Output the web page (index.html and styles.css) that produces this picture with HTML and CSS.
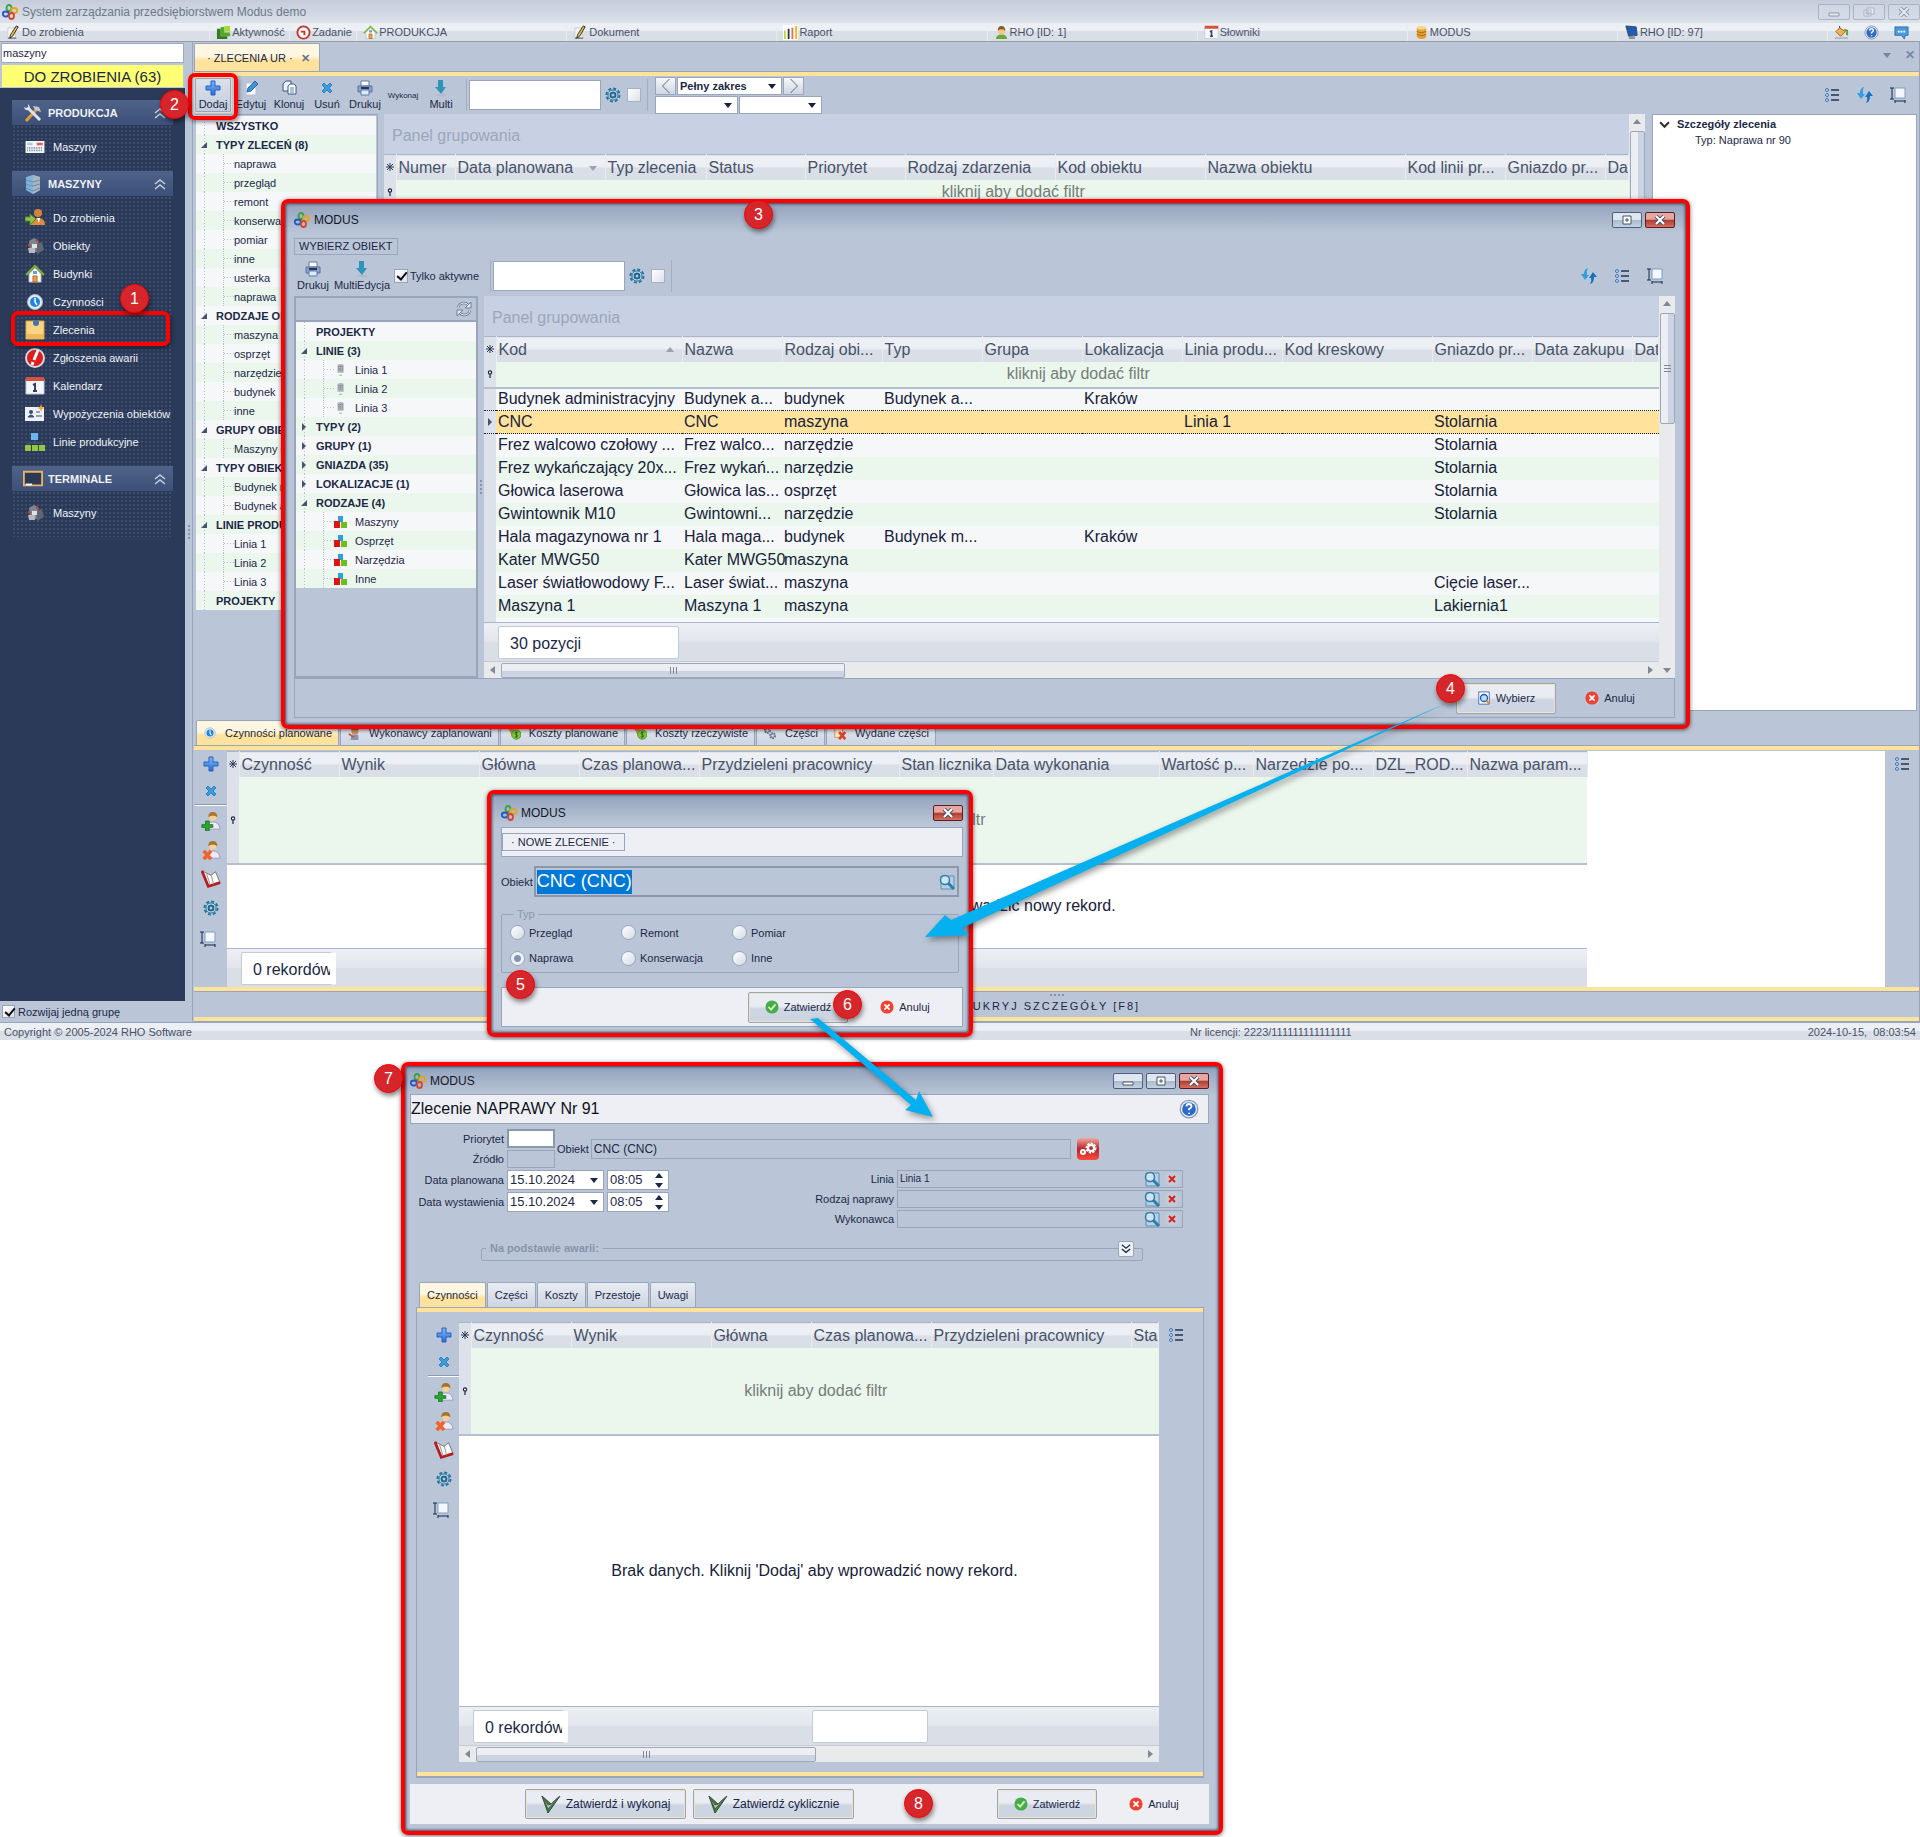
FILE: index.html
```html
<!DOCTYPE html>
<html lang="pl">
<head>
<meta charset="utf-8">
<title>System zarządzania przedsiębiorstwem Modus demo</title>
<link rel="stylesheet" href="styles.css">
</head>
<body>
<svg class="defs" aria-hidden="true">
<defs>
<linearGradient id="g-blue" x1="0" y1="0" x2="0" y2="1"><stop offset="0" stop-color="#7db8f5"/><stop offset="1" stop-color="#2a6fd6"/></linearGradient>
<linearGradient id="g-red" x1="0" y1="0" x2="0" y2="1"><stop offset="0" stop-color="#f0a8a0"/><stop offset=".5" stop-color="#b8252a"/><stop offset="1" stop-color="#ff4a3c"/></linearGradient>
</defs>
<symbol id="i-logo" viewBox="0 0 16 16"><g fill="none" stroke-width="1.800"><ellipse cx="7" cy="4" rx="2.500" ry="3" stroke="#3ba23e"/><ellipse cx="3.800" cy="10" rx="3" ry="2.500" stroke="#2458c8"/><ellipse cx="12.200" cy="6.500" rx="3" ry="2.500" stroke="#e8a317"/><ellipse cx="9.500" cy="12" rx="2.500" ry="3" stroke="#d8452c"/></g></symbol>
<symbol id="i-pencil" viewBox="0 0 16 16"><path d="M2 3h8v11H2z" fill="#f6f6f6" stroke="#c9ccd2"/><path d="m11 1 2 1-6 10-3 2 1-4z" fill="#f0c34c" stroke="#222"/><path d="M2 14h9" stroke="#4a4a4a"/></symbol>
<symbol id="i-activity" viewBox="0 0 16 16"><path d="M1 4h4v8h7v3H1z" fill="#2f7d1e"/><path d="M5 2h4v6h6v4H5z" fill="#56a62a"/><path d="M9 1h6v6H9z" fill="#a6d93e"/></symbol>
<symbol id="i-clockred" viewBox="0 0 16 16"><circle cx="8" cy="8" r="6.500" fill="#fff" stroke="#c0352c" stroke-width="2"/><path d="M5 7h4v4" fill="none" stroke="#c0352c" stroke-width="2"/></symbol>
<symbol id="i-house" viewBox="0 0 20 20"><path d="M4 10v8h12v-8l-6-6z" fill="#fbfbfb" stroke="#b9bec8"/><path d="m1 11 9-9 9 9" fill="none" stroke="#7fb23a" stroke-width="2"/><path d="M8 12h4v6H8z" fill="#e9a24e" stroke="#b06a1c"/><path d="M8 7h4v3H8z" fill="#6d9bd8"/></symbol>
<symbol id="i-bars" viewBox="0 0 16 16"><path d="M0 0h16v16H0z" fill="#fff"/><path d="M2 6v9" stroke="#c4d72e" stroke-width="2"/><path d="M6 4v11" stroke="#2b3a4c" stroke-width="2"/><path d="M10 3v12" stroke="#ec6a66" stroke-width="2"/><path d="M14 1v14" stroke="#f2b70c" stroke-width="2"/></symbol>
<symbol id="i-user" viewBox="0 0 16 16"><path d="M2 15q0-5 6-5t6 5z" fill="#6aa836"/><circle cx="8" cy="6" r="4" fill="#f0c590"/><path d="M4 6q0-5 4-5t4 5q-4-3-8 0" fill="#8a5a1e"/></symbol>
<symbol id="i-cal" viewBox="0 0 20 20"><path d="M1 3h18v15H1z" fill="#f4f6fa" stroke="#c3cad8"/><path d="M1 1h18v4H1z" fill="#d9503e"/><path d="M8 9 10 8v7M8 15h4" fill="none" stroke="#33415c" stroke-width="2"/></symbol>
<symbol id="i-db" viewBox="0 0 16 16"><path d="M3 3v10q5 4 10 0V3z" fill="#e5a034"/><ellipse cx="8" cy="3" rx="5" ry="2" fill="#f8d58a"/><path d="M3 7q5 3 10 0M3 10q5 3 10 0" fill="none" stroke="#a86a10"/></symbol>
<symbol id="i-monitor" viewBox="0 0 16 16"><path d="m2 1 11 1 1 9-9 1z" fill="#1d5bb5" stroke="#3d4654"/><path d="m6 12 5-1 1 4H5z" fill="#8a93a1"/></symbol>
<symbol id="i-bucket" viewBox="0 0 16 16"><path d="m6 3 6 4-5 5-5-5z" fill="#f0b452" stroke="#a4551a"/><path d="M6 3V1" stroke="#333"/><path d="m11 5 3 1v5" fill="none" stroke="#5aa02c" stroke-width="2"/><path d="M1 14h14" stroke="#b5b9c2" stroke-width="2"/></symbol>
<symbol id="i-help" viewBox="0 0 16 16"><circle cx="8" cy="8" r="7" fill="#eef2fa" stroke="#8b97ad"/><circle cx="8" cy="8" r="5.500" fill="#2a6ac8"/><path d="M6 6q0-2 2-2t2 2q0 1-2 2v1M8 11v1" fill="none" stroke="#fff" stroke-width="1.500"/></symbol>
<symbol id="i-chat" viewBox="0 0 16 16"><path d="M1 2h14v9h-3l-1 4-3-4H1z" fill="#4a9ad8" stroke="#2f72ad"/><path d="M4 7h2M7 7h2M10 7h2" stroke="#fff" stroke-width="2"/></symbol>
<symbol id="i-tools" viewBox="0 0 20 20"><path d="m3 18 10-11" stroke="#e29b3c" stroke-width="3"/><path d="m10 3 6 1 2 5-3-1-3-1z" fill="#c3cad6"/><path d="m5 5 12 12" stroke="#dfe4ec" stroke-width="3"/><path d="M1 4q1 4 5 3 2-3-1-6v3L3 5z" fill="#dfe4ec"/></symbol>
<symbol id="i-keyboard" viewBox="0 0 22 14"><path d="M0 0h22v14H0z" fill="#f2f5fa"/><path d="M2 2h6v3H2z" fill="#b4c8e6"/><path d="M13 2h7v3h-7z" fill="#e06050"/><path d="M2 8h18M2 11h18" stroke="#7a8598" stroke-width="2" stroke-dasharray="1 1"/></symbol>
<symbol id="i-barrel" viewBox="0 0 20 20"><path d="m3 3 7-2 7 2v13l-7 4-7-4z" fill="#7fb4da"/><path d="m10 1 7 2v13l-7 4z" fill="#a9b5c2"/><path d="m3 6 7 2 7-2M3 10l7 2 7-2M3 14l7 3 7-3" fill="none" stroke="#6f8ca8"/></symbol>
<symbol id="i-todo" viewBox="0 0 20 20"><circle cx="13" cy="5" r="4" fill="#d6833a"/><path d="M6 17q0-7 7-7t7 7z" fill="#e08b3c"/><path d="m12 10 2 5 1-5z" fill="#fff"/><path d="M0 9h5V6l6 5-6 6v-4H0z" fill="#8bc34a" stroke="#55862a"/></symbol>
<symbol id="i-machine" viewBox="0 0 20 20"><path d="M4 5 9 2l4 2v12H5z" fill="#7d8590"/><path d="m11 8 6-2 2 8-7 4z" fill="#5d6672"/><path d="M3 12h7v5H4z" fill="#b4bac2"/><path d="M7 8h5v4H7z" fill="#dfe3e8"/><path d="m11 4 3 2M3 9l3 1" stroke="#c0453a" stroke-width="2"/></symbol>
<symbol id="i-clock" viewBox="0 0 20 20"><circle cx="10" cy="10" r="7.500" fill="#e4eaf2" stroke="#aeb8c8"/><circle cx="10" cy="10" r="5" fill="#1f86dc"/><path d="M10 6v4l2 3" fill="none" stroke="#fff" stroke-width="1.500"/></symbol>
<symbol id="i-note" viewBox="0 0 20 20"><path d="M1 1h18v18H1z" fill="#f9d483" stroke="#d9a844"/><path d="M1 14h18v5H1z" fill="#efb95a"/><circle cx="11" cy="3" r="3" fill="#3f74b8"/></symbol>
<symbol id="i-alert" viewBox="0 0 20 20"><circle cx="10" cy="10" r="9" fill="#e01c1c" stroke="#d5d8de" stroke-width="2"/><path d="M13 2 9 12M8 14l-1 3" stroke="#fff" stroke-width="3"/></symbol>
<symbol id="i-card" viewBox="0 0 20 20"><path d="M0 3h19v14H0z" fill="#eef2f8"/><circle cx="6" cy="8" r="2" fill="#38507c"/><path d="M3 13q3-4 6 0zM11 8h4M11 12h6" fill="#38507c" stroke="#38507c"/><path d="m16 0 1 3 3 1-3 1-1 3-1-3-3-1 3-1z" fill="#f5a437"/></symbol>
<symbol id="i-org" viewBox="0 0 20 20"><path d="M6 1h7v7H6z" fill="#6db3ee"/><path d="M10 8v4M3 13v-2h14v2" fill="none" stroke="#46597a"/><path d="M0 13h6v6H0zM7 13h6v6H7zM14 13h6v6h-6z" fill="#93c83e"/></symbol>
<symbol id="i-term" viewBox="0 0 22 18"><path d="M1 1h20v15H1z" fill="#2c3a56" stroke="#e6b464" stroke-width="2"/><path d="M3 15h7" stroke="#fff" stroke-width="2"/></symbol>
<symbol id="i-plus" viewBox="0 0 16 16"><path d="M6 1h4v5h5v4h-5v5H6v-5H1V6h5z" fill="url(#g-blue)" stroke="#2560c0"/></symbol>
<symbol id="i-x" viewBox="0 0 16 16"><path d="m5 3 3 3 3-3 2 2-3 3 3 3-2 2-3-3-3 3-2-2 3-3-3-3z" fill="#3f9ad6" stroke="#2d84c2"/></symbol>
<symbol id="i-edit" viewBox="0 0 16 16"><path d="M3 3h7l3 3v9H3z" fill="#f6f8fc" stroke="#b5bfd0"/><path d="m12 1 3 3-7 7-4 1 1-4z" fill="#3d94dd" stroke="#2b6298"/></symbol>
<symbol id="i-copy" viewBox="0 0 16 16"><path d="M5 1h5v10H2V4z" fill="#eef2f8" stroke="#3f5578"/><path d="M9 4h4l2 2v8H7V6z" fill="#fff" stroke="#3f5578"/><path d="M9 8h4M9 10h4M9 12h4" stroke="#4f86c8"/></symbol>
<symbol id="i-print" viewBox="0 0 16 16"><path d="M4 1h8v5H4z" fill="#fff" stroke="#6278a4"/><path d="M1 6h14v6H1z" fill="#8fa1c8" stroke="#5a70a2"/><path d="M4 8h8" stroke="#23345e" stroke-width="2"/><path d="M4 10h8v5H4z" fill="#d8ecfb" stroke="#6278a4"/></symbol>
<symbol id="i-down" viewBox="0 0 16 16"><path d="M5 0h5v7h3l-5 7-6-7h3z" fill="#2f94b8"/><path d="M3 15h10" stroke="#a6b2c2"/></symbol>
<symbol id="i-gear" viewBox="0 0 16 16"><circle cx="8" cy="8" r="6.500" fill="none" stroke="#27749c" stroke-width="2" stroke-dasharray="3 2"/><circle cx="8" cy="8" r="5" fill="#d8ecf4" stroke="#27749c"/><circle cx="8" cy="8" r="2.500" fill="#bac6d7" stroke="#1c6590" stroke-width="2"/></symbol>
<symbol id="i-list" viewBox="0 0 16 16"><g fill="#cfe0f4" stroke="#3c74b8"><circle cx="3" cy="3" r="1.500"/><circle cx="3" cy="8" r="1.500"/><circle cx="3" cy="13" r="1.500"/></g><path d="M7 3h8M7 8h8M7 13h8" stroke="#243452" stroke-width="1.500"/></symbol>
<symbol id="i-sync" viewBox="0 0 16 16"><path d="M7 0Q3 1 3 6H0l4 6 4-5H6q-1-4 1-7" fill="#2fa0dc"/><path d="M9 16q4-1 4-7h3l-4-5-4 6h2q1 3-1 6" fill="#1a6fc0"/></symbol>
<symbol id="i-size" viewBox="0 0 16 16"><path d="M5 1h10v10H5z" fill="#f3f7fd" stroke="#7f9cc8"/><path d="M0 1h4M2 1v11M0 12h4M5 14h10M5 13v3M15 13v3" fill="none" stroke="#14274c"/></symbol>
<symbol id="i-reload" viewBox="0 0 16 16"><path d="M2 7q1-5 6-5 3 0 5 3M14 9q-1 5-6 5-3 0-5-3" fill="none" stroke="#6f809c" stroke-width="2.500"/><path d="M2 7q1-5 6-5 3 0 5 3M14 9q-1 5-6 5-3 0-5-3" fill="none" stroke="#e4e9f1"/><path d="M15 1v6H9zM1 15V9h6z" fill="#e4e9f1" stroke="#6f809c"/></symbol>
<symbol id="i-building" viewBox="0 0 12 16"><path d="m2 2 4-1 3 1v9H2z" fill="#aeb1ba"/><path d="M3 4h5M3 6h5M3 8h5" stroke="#6d7180" stroke-dasharray="1 1"/><path d="M4 14h3" stroke="#4ad04a"/></symbol>
<symbol id="i-cubes" viewBox="0 0 14 14"><path d="M4 1h5v6H4z" fill="#2aa0dc"/><path d="M0 6h6v7H0z" fill="#dc1414"/><path d="M7 7h6v6H7z" fill="#6abf1e"/></symbol>
<symbol id="i-useradd" viewBox="0 0 20 22"><path d="M5 20q0-8 7-8t8 8z" fill="#eceaf6" stroke="#9d9cc0"/><circle cx="12" cy="7" r="4" fill="#f6d09a"/><path d="M7 7q0-6 5-6t5 6q-5-4-10 0" fill="#a8742c"/><path d="M4 11h4v4h4v3H8v4H4v-4H0v-3h4z" fill="#2da436" stroke="#1a7a22"/></symbol>
<symbol id="i-userdel" viewBox="0 0 20 22"><path d="M5 20q0-8 7-8t8 8z" fill="#eceaf6" stroke="#9d9cc0"/><circle cx="12" cy="7" r="4" fill="#f6d09a"/><path d="M7 7q0-6 5-6t5 6q-5-4-10 0" fill="#a8742c"/><path d="m2 12 8 9m0-9-8 9" stroke="#f0642c" stroke-width="4"/></symbol>
<symbol id="i-book" viewBox="0 0 22 20"><path d="m1 1 7 17 13-4-5-12-5 4z" fill="#fbfbfb" stroke="#6d6d6d"/><path d="m1 1 7 17 13-4" fill="none" stroke="#b41c20" stroke-width="3"/><path d="m11 5 3 11M6 4l4 12" stroke="#8d8d8d"/></symbol>
<symbol id="i-lens" viewBox="0 0 16 16"><path d="M2 2h13v13H2z" fill="#b5d0e4" stroke="#5d8fb4"/><circle cx="6" cy="6" r="4.500" fill="#cfe4f0" stroke="#2e7ea8" stroke-width="1.500"/><path d="m9 9 6 6" stroke="#2e7ea8" stroke-width="3"/></symbol>
<symbol id="i-doc" viewBox="0 0 16 16"><path d="M2 1h12v14H2z" fill="#fff" stroke="#3a62b0"/><circle cx="8" cy="8" r="4" fill="#b8e0f8" stroke="#2458a8" stroke-width="1.500"/><path d="m11 11 3 4" stroke="#e08a1e" stroke-width="2"/></symbol>
<symbol id="i-ok" viewBox="0 0 16 16"><circle cx="8" cy="8" r="7.500" fill="#46ad4c"/><path d="m4 8 3 3 5-6" fill="none" stroke="#d9f7b8" stroke-width="2"/></symbol>
<symbol id="i-no" viewBox="0 0 16 16"><circle cx="8" cy="8" r="7.500" fill="#f0402f"/><path d="m5 5 6 6m0-6-6 6" stroke="#fff" stroke-width="2"/></symbol>
<symbol id="i-vee" viewBox="0 0 20 20"><path d="M1 2 7 19 19 2l-9 8z" fill="#2c9422" stroke="#37433a"/><path d="m1 2 6 9 3-1 9-8-12 13z" fill="#b9c9bb" stroke="#4a564d"/></symbol>
<symbol id="i-gears" viewBox="0 0 22 22"><rect width="22" height="22" rx="4" fill="url(#g-red)"/><circle cx="14" cy="10" r="4" fill="none" stroke="#fff" stroke-width="3" stroke-dasharray="2 1"/><circle cx="14" cy="10" r="3" fill="none" stroke="#fff" stroke-width="2"/><circle cx="6" cy="14" r="2" fill="none" stroke="#fff" stroke-width="2"/></symbol>
<symbol id="i-redx" viewBox="0 0 16 16"><circle cx="8" cy="8" r="7" fill="#c4cbd8"/><path d="m5 5 6 6m0-6-6 6" stroke="#d8201c" stroke-width="2"/></symbol>
<symbol id="i-worker" viewBox="0 0 16 16"><path d="M5 10h8v6H4z" fill="#8795b5"/><circle cx="9" cy="6" r="4" fill="#c98f5c"/><path d="M4 4q5-5 10 0z" fill="#4a403a"/><path d="m2 9 6 4" stroke="#c4572c" stroke-width="2"/></symbol>
<symbol id="i-money" viewBox="0 0 18 18"><path d="m1 2 5-1 4 5-4 6z" fill="#d98c4c"/><circle cx="12" cy="11" r="6" fill="#7dc53a" stroke="#3f8a1c"/><path d="M14 8h-3q-2 2 1 3t1 3h-3M12 7v8" fill="none" stroke="#1d5c10"/></symbol>
<symbol id="i-cogs" viewBox="0 0 16 16"><g fill="none" stroke="#66738f"><circle cx="5" cy="5" r="3" stroke-width="2" stroke-dasharray="2 1"/><circle cx="11" cy="11" r="3" stroke-width="2" stroke-dasharray="2 1"/><circle cx="5" cy="5" r="2"/><circle cx="11" cy="11" r="2"/></g></symbol>
<symbol id="i-issued" viewBox="0 0 16 16"><path d="M2 1h9v12H2z" fill="#f8e8c8" stroke="#d88a4c"/><path d="m7 7 7 8m0-8-7 8" stroke="#d84028" stroke-width="3"/></symbol>
<symbol id="i-star" viewBox="0 0 8 8"><path d="M4 0v8M0 4h8M1 1l6 6M7 1 1 7" stroke="#2b3753"/></symbol>
<symbol id="i-pin" viewBox="0 0 8 10"><circle cx="4" cy="3" r="2" fill="#fff" stroke="#17213a" stroke-width="1.500"/><path d="M4 5v5" stroke="#17213a" stroke-width="1.500"/></symbol>
<symbol id="i-open" viewBox="0 0 8 8"><path d="M7 1v6H1z" fill="#46536c"/></symbol>
<symbol id="i-closed" viewBox="0 0 8 8"><path d="m2 0 4 4-4 4z" fill="#46536c"/></symbol>
<symbol id="i-tri" viewBox="0 0 8 8"><path d="M0 2h8L4 7z" fill="currentColor"/></symbol>
<symbol id="i-chev" viewBox="0 0 12 12"><path d="m1 6 5-4 5 4M1 11l5-4 5 4" fill="none" stroke="currentColor" stroke-width="1.500"/></symbol>
<symbol id="i-close" viewBox="0 0 12 10"><path d="m2 1 8 8m0-8-8 8" stroke="#47546b" stroke-width="4"/><path d="m2 1 8 8m0-8-8 8" stroke="#fff" stroke-width="2"/></symbol>
<symbol id="i-max" viewBox="0 0 12 10"><path d="M2 1h8v8H2zM5 4h2v2H5z" fill="#fff" stroke="#47546b"/></symbol>
<symbol id="i-min" viewBox="0 0 12 10"><path d="M1 6h10v3H1z" fill="#fff" stroke="#47546b"/></symbol>
<symbol id="i-rest" viewBox="0 0 12 10"><path d="M4 1h7v6H4zM1 3h7v6H1zM3 5h3v2H3z" fill="#fff" stroke="#8590a4"/></symbol>
</svg>

<div class="desktop">
<main class="app">
  <header class="titlebar"><svg class="ic16"><use href="#i-logo"/></svg><h1>System zarządzania przedsiębiorstwem Modus demo</h1>
    <div class="winbtns ghost"><button aria-label="Minimalizuj"><svg><use href="#i-min"/></svg></button><button aria-label="Przywróć"><svg><use href="#i-rest"/></svg></button><button aria-label="Zamknij"><svg><use href="#i-close"/></svg></button></div>
  </header>
  <nav class="menubar">
    <a href="#"><svg><use href="#i-pencil"/></svg>Do zrobienia</a>
    <a href="#"><svg><use href="#i-activity"/></svg>Aktywność</a>
    <a href="#"><svg><use href="#i-clockred"/></svg>Zadanie</a>
    <a href="#"><svg><use href="#i-house"/></svg>PRODUKCJA</a>
    <a href="#"><svg><use href="#i-pencil"/></svg>Dokument</a>
    <a href="#"><svg><use href="#i-bars"/></svg>Raport</a>
    <a href="#"><svg><use href="#i-user"/></svg>RHO [ID: 1]</a>
    <a href="#"><svg><use href="#i-cal"/></svg>Słowniki</a>
    <a href="#"><svg><use href="#i-db"/></svg>MODUS</a>
    <a href="#"><svg><use href="#i-monitor"/></svg>RHO [ID: 97]</a>
    <span class="menuicons"><svg><use href="#i-bucket"/></svg><svg><use href="#i-help"/></svg><svg><use href="#i-chat"/></svg></span>
  </nav>

  <div class="workspace">
    <aside class="sidebar">
      <input class="search" type="text" value="maszyny" aria-label="Szukaj">
      <button class="todo">DO ZROBIENIA (63)</button>
      <nav class="menu">
        <h2><svg><use href="#i-tools"/></svg>PRODUKCJA<svg class="chev"><use href="#i-chev"/></svg></h2>
        <ul>
          <li><a href="#"><svg class="kb"><use href="#i-keyboard"/></svg>Maszyny</a></li>
        </ul>
        <h2><svg><use href="#i-barrel"/></svg>MASZYNY<svg class="chev"><use href="#i-chev"/></svg></h2>
        <ul>
          <li><a href="#"><svg><use href="#i-todo"/></svg>Do zrobienia</a></li>
          <li><a href="#"><svg><use href="#i-machine"/></svg>Obiekty</a></li>
          <li><a href="#"><svg><use href="#i-house"/></svg>Budynki</a></li>
          <li><a href="#"><svg><use href="#i-clock"/></svg>Czynności</a></li>
          <li><a href="#"><svg><use href="#i-note"/></svg>Zlecenia</a></li>
          <li><a href="#"><svg><use href="#i-alert"/></svg>Zgłoszenia awarii</a></li>
          <li><a href="#"><svg><use href="#i-cal"/></svg>Kalendarz</a></li>
          <li><a href="#"><svg><use href="#i-card"/></svg>Wypożyczenia obiektów</a></li>
          <li><a href="#"><svg><use href="#i-org"/></svg>Linie produkcyjne</a></li>
        </ul>
        <h2><svg><use href="#i-term"/></svg>TERMINALE<svg class="chev"><use href="#i-chev"/></svg></h2>
        <ul>
          <li><a href="#"><svg><use href="#i-machine"/></svg>Maszyny</a></li>
        </ul>
      </nav>
      <label class="onegroup"><input type="checkbox" class="cb" checked>Rozwijaj jedną grupę</label>
    </aside>
    <div class="splitter"><i class="dots"></i></div>

    <section class="content">
      <div class="tabstrip">
        <button class="tab active doc">· ZLECENIA UR ·<b>✕</b></button>
        <span class="stripctl"><svg><use href="#i-tri"/></svg><b>✕</b></span>
      </div>
      <div class="amber top"></div>
      <div class="toolbar">
        <button class="tool hot"><svg><use href="#i-plus"/></svg>Dodaj</button>
        <button class="tool"><svg><use href="#i-edit"/></svg>Edytuj</button>
        <button class="tool"><svg><use href="#i-copy"/></svg>Klonuj</button>
        <button class="tool"><svg><use href="#i-x"/></svg>Usuń</button>
        <button class="tool"><svg><use href="#i-print"/></svg>Drukuj</button>
        <button class="tool tiny">Wykonaj</button>
        <button class="tool"><svg><use href="#i-down"/></svg>Multi</button>
        <i class="vsep"></i>
        <input class="find" type="text" aria-label="Filtr tekstowy">
        <svg class="ic16"><use href="#i-gear"/></svg>
        <input type="checkbox" class="cb soft" aria-label="Filtr zaawansowany">
        <i class="vsep"></i>
        <div class="range">
          <div class="rangerow"><button class="arrow" aria-label="Poprzedni"><svg viewBox="0 0 10 16"><path d="M9 0 1 8l8 8" fill="none" stroke="#4b566b"/></svg></button><span class="select wide"><select aria-label="Zakres"><option>Pełny zakres</option></select></span><button class="arrow" aria-label="Następny"><svg viewBox="0 0 10 16"><path d="m1 0 8 8-8 8" fill="none" stroke="#4b566b"/></svg></button></div>
          <div class="rangerow"><span class="select"><select aria-label="Od"><option></option></select></span><span class="select"><select aria-label="Do"><option></option></select></span></div>
        </div>
        <div class="righticons"><svg><use href="#i-list"/></svg><svg><use href="#i-sync"/></svg><svg><use href="#i-size"/></svg></div>
      </div>

      <div class="upper">
        <ul class="tree maintree">
          <li class="g"><i></i>WSZYSTKO</li>
          <li class="g"><svg><use href="#i-open"/></svg>TYPY ZLECEŃ (8)</li>
          <li>naprawa</li><li>przegląd</li><li>remont</li><li>konserwacja</li><li>pomiar</li><li>inne</li><li>usterka</li><li>naprawa</li>
          <li class="g"><svg><use href="#i-open"/></svg>RODZAJE OBIEKTÓW</li>
          <li>maszyna</li><li>osprzęt</li><li>narzędzie</li><li>budynek</li><li>inne</li>
          <li class="g"><svg><use href="#i-open"/></svg>GRUPY OBIEKTÓW</li>
          <li>Maszyny do</li>
          <li class="g"><svg><use href="#i-open"/></svg>TYPY OBIEKTÓW</li>
          <li>Budynek m</li><li>Budynek a</li>
          <li class="g"><svg><use href="#i-open"/></svg>LINIE PRODUKCYJNE</li>
          <li>Linia 1</li><li>Linia 2</li><li>Linia 3</li>
          <li class="g"><i></i>PROJEKTY</li>
        </ul>
        <div class="gridbox">
          <div class="gridcol">
            <div class="groupby">Panel grupowania</div>
            <table class="grid">
              <colgroup><col class="w12"><col class="w59"><col class="w150"><col class="w101"><col class="w99"><col class="w100"><col class="w150"><col class="w150"><col class="w200"><col class="w100"><col class="w100"><col></colgroup>
              <thead><tr><th class="ind"><svg><use href="#i-star"/></svg></th><th>Numer</th><th>Data planowana<svg class="sort"><use href="#i-tri"/></svg></th><th>Typ zlecenia</th><th>Status</th><th>Priorytet</th><th>Rodzaj zdarzenia</th><th>Kod obiektu</th><th>Nazwa obiektu</th><th>Kod linii pr...</th><th>Gniazdo pr...</th><th>Dat</th></tr></thead>
              <tbody><tr class="filter"><td class="ind"><svg><use href="#i-pin"/></svg></td><td colspan="11">kliknij aby dodać filtr</td></tr></tbody>
            </table>
          </div>
          <div class="vscroll"><svg class="up"><use href="#i-tri"/></svg><i class="thumb long"></i></div>
        </div>
        <div class="details"><strong><svg viewBox="0 0 10 8"><path d="m1 2 4 4 4-4" fill="none" stroke="#333" stroke-width="2"/></svg>Szczegóły zlecenia</strong><span>Typ: Naprawa nr 90</span></div>
      </div>

      <div class="tabstrip low">
        <button class="tab active"><svg><use href="#i-clock"/></svg>Czynności planowane</button>
        <button class="tab"><svg><use href="#i-worker"/></svg>Wykonawcy zaplanowani</button>
        <button class="tab"><svg><use href="#i-money"/></svg>Koszty planowane</button>
        <button class="tab"><svg><use href="#i-money"/></svg>Koszty rzeczywiste</button>
        <button class="tab"><svg><use href="#i-cogs"/></svg>Części</button>
        <button class="tab"><svg><use href="#i-issued"/></svg>Wydane części</button>
      </div>
      <div class="amber top"></div>
      <div class="lower">
        <div class="vtools">
          <svg><use href="#i-plus"/></svg><svg><use href="#i-x"/></svg><hr><svg class="big"><use href="#i-useradd"/></svg><svg class="big"><use href="#i-userdel"/></svg><svg class="big"><use href="#i-book"/></svg><svg><use href="#i-gear"/></svg><svg><use href="#i-size"/></svg>
        </div>
        <div class="lowgrid">
          <table class="grid">
            <colgroup><col class="w12"><col class="w100"><col class="w140"><col class="w100"><col class="w120"><col class="w200"><col class="w94"><col class="w166"><col class="w94"><col class="w120"><col class="w94"><col class="w120"></colgroup>
            <thead><tr><th class="ind"><svg><use href="#i-star"/></svg></th><th>Czynność</th><th>Wynik</th><th>Główna</th><th>Czas planowa...</th><th>Przydzieleni pracownicy</th><th>Stan licznika</th><th>Data wykonania</th><th>Wartość p...</th><th>Narzedzie po...</th><th>DZL_ROD...</th><th>Nazwa param...</th></tr></thead>
            <tbody><tr class="filter tall"><td class="ind"><svg><use href="#i-pin"/></svg></td><td colspan="11">kliknij aby dodać filtr</td></tr></tbody>
          </table>
          <p class="empty">Brak danych. Kliknij 'Dodaj' aby wprowadzić nowy rekord.</p>
          <div class="gridfoot"><span class="sum short">0 rekordów</span></div>
        </div>
        <div class="rightstrip"><svg><use href="#i-list"/></svg></div>
      </div>
      <div class="amber bottom"></div>
      <button class="hide"><i class="dots row"></i>UKRYJ SZCZEGÓŁY [F8]</button>
      <div class="amber bottom"></div>
    </section>
  </div>
  <footer class="status"><span>Copyright © 2005-2024 RHO Software</span><span>Nr licencji: 2223/111111111111111</span><span>2024-10-15,&nbsp; 08:03:54</span></footer>
</main>

<section class="window pick">
  <header class="wintitle"><svg class="ic16"><use href="#i-logo"/></svg><h2>MODUS</h2><div class="winbtns"><button aria-label="Maksymalizuj"><svg><use href="#i-max"/></svg></button><button class="red" aria-label="Zamknij"><svg><use href="#i-close"/></svg></button></div></header>
  <div class="picktag"><span class="tag">WYBIERZ OBIEKT</span></div>
  <div class="toolbar">
    <button class="tool"><svg><use href="#i-print"/></svg>Drukuj</button>
    <button class="tool multi"><svg><use href="#i-down"/></svg>MultiEdycja</button>
    <label class="only"><input type="checkbox" class="cb" checked>Tylko aktywne</label>
    <i class="vsep"></i>
    <input class="find" type="text" aria-label="Szukaj obiektu">
    <svg class="ic16"><use href="#i-gear"/></svg>
    <input type="checkbox" class="cb soft" aria-label="Dokładne dopasowanie">
    <i class="vsep"></i>
    <div class="righticons"><svg><use href="#i-sync"/></svg><svg><use href="#i-list"/></svg><svg><use href="#i-size"/></svg></div>
  </div>
  <div class="pickbody">
    <div class="treebox">
      <div class="treehead"><svg class="ic16"><use href="#i-reload"/></svg></div>
      <ul class="tree">
        <li class="g"><i></i>PROJEKTY</li>
        <li class="g"><svg><use href="#i-open"/></svg>LINIE (3)</li>
        <li><svg><use href="#i-building"/></svg>Linia 1</li><li><svg><use href="#i-building"/></svg>Linia 2</li><li><svg><use href="#i-building"/></svg>Linia 3</li>
        <li class="g"><svg><use href="#i-closed"/></svg>TYPY (2)</li>
        <li class="g"><svg><use href="#i-closed"/></svg>GRUPY (1)</li>
        <li class="g"><svg><use href="#i-closed"/></svg>GNIAZDA (35)</li>
        <li class="g"><svg><use href="#i-closed"/></svg>LOKALIZACJE (1)</li>
        <li class="g"><svg><use href="#i-open"/></svg>RODZAJE (4)</li>
        <li><svg><use href="#i-cubes"/></svg>Maszyny</li><li><svg><use href="#i-cubes"/></svg>Osprzęt</li><li><svg><use href="#i-cubes"/></svg>Narzędzia</li><li><svg><use href="#i-cubes"/></svg>Inne</li>
      </ul>
    </div>
    <div class="splitter thin"><i class="dots"></i></div>
    <div class="pickgrid">
      <div class="gridcol">
        <div class="groupby">Panel grupowania</div>
        <div class="rows">
        <table class="grid">
          <colgroup><col class="w12"><col class="w186"><col class="w100"><col class="w100"><col class="w100"><col class="w100"><col class="w100"><col class="w100"><col class="w150"><col class="w100"><col class="w100"><col></colgroup>
          <thead><tr><th class="ind"><svg><use href="#i-star"/></svg></th><th>Kod<svg class="sort asc"><use href="#i-tri"/></svg></th><th>Nazwa</th><th>Rodzaj obi...</th><th>Typ</th><th>Grupa</th><th>Lokalizacja</th><th>Linia produ...</th><th>Kod kreskowy</th><th>Gniazdo pr...</th><th>Data zakupu</th><th>Dat</th></tr></thead>
          <tbody>
          <tr class="filter"><td class="ind"><svg><use href="#i-pin"/></svg></td><td colspan="11">kliknij aby dodać filtr</td></tr>
          <tr><td class="ind"></td><td>Budynek administracyjny</td><td>Budynek a...</td><td>budynek</td><td>Budynek a...</td><td></td><td>Kraków</td><td></td><td></td><td></td><td></td><td></td></tr>
          <tr class="sel"><td class="ind"><svg><use href="#i-closed"/></svg></td><td>CNC</td><td>CNC</td><td>maszyna</td><td></td><td></td><td></td><td>Linia 1</td><td></td><td>Stolarnia</td><td></td><td></td></tr>
          <tr><td class="ind"></td><td>Frez walcowo czołowy ...</td><td>Frez walco...</td><td>narzędzie</td><td></td><td></td><td></td><td></td><td></td><td>Stolarnia</td><td></td><td></td></tr>
          <tr><td class="ind"></td><td>Frez wykańczający 20x...</td><td>Frez wykań...</td><td>narzędzie</td><td></td><td></td><td></td><td></td><td></td><td>Stolarnia</td><td></td><td></td></tr>
          <tr><td class="ind"></td><td>Głowica laserowa</td><td>Głowica las...</td><td>osprzęt</td><td></td><td></td><td></td><td></td><td></td><td>Stolarnia</td><td></td><td></td></tr>
          <tr><td class="ind"></td><td>Gwintownik M10</td><td>Gwintowni...</td><td>narzędzie</td><td></td><td></td><td></td><td></td><td></td><td>Stolarnia</td><td></td><td></td></tr>
          <tr><td class="ind"></td><td>Hala magazynowa nr 1</td><td>Hala maga...</td><td>budynek</td><td>Budynek m...</td><td></td><td>Kraków</td><td></td><td></td><td></td><td></td><td></td></tr>
          <tr><td class="ind"></td><td>Kater MWG50</td><td>Kater MWG50</td><td>maszyna</td><td></td><td></td><td></td><td></td><td></td><td></td><td></td><td></td></tr>
          <tr><td class="ind"></td><td>Laser światłowodowy F...</td><td>Laser świat...</td><td>maszyna</td><td></td><td></td><td></td><td></td><td></td><td>Cięcie laser...</td><td></td><td></td></tr>
          <tr><td class="ind"></td><td>Maszyna 1</td><td>Maszyna 1</td><td>maszyna</td><td></td><td></td><td></td><td></td><td></td><td>Lakiernia1</td><td></td><td></td></tr>
          <tr><td class="ind"></td><td></td><td></td><td></td><td></td><td></td><td></td><td></td><td></td><td></td><td></td><td></td></tr>
          </tbody>
        </table>
        </div>
        <div class="gridfoot"><span class="sum">30 pozycji</span></div>
        <div class="hscroll"><svg class="left"><use href="#i-tri"/></svg><i class="thumb"></i><svg class="right"><use href="#i-tri"/></svg></div>
      </div>
      <div class="vscroll"><svg class="up"><use href="#i-tri"/></svg><i class="thumb"></i><svg class="dn"><use href="#i-tri"/></svg></div>
    </div>
  </div>
  <footer class="winfoot"><button class="btn"><svg><use href="#i-doc"/></svg>Wybierz</button><button class="btn flat"><svg><use href="#i-no"/></svg>Anuluj</button></footer>
</section>

<section class="window neworder">
  <header class="wintitle"><svg class="ic16"><use href="#i-logo"/></svg><h2>MODUS</h2><div class="winbtns"><button class="red" aria-label="Zamknij"><svg><use href="#i-close"/></svg></button></div></header>
  <div class="whitebar"><span class="tag">· NOWE ZLECENIE ·</span></div>
  <form>
    <div class="objrow"><label for="ob">Obiekt</label><div class="objfield"><input id="ob" class="picked" type="text" value="CNC (CNC)"><button type="button" aria-label="Wyszukaj obiekt"><svg class="ic16"><use href="#i-lens"/></svg></button></div></div>
    <fieldset class="kinds"><legend>Typ</legend>
      <label><input type="radio" name="k">Przegląd</label><label><input type="radio" name="k">Remont</label><label><input type="radio" name="k">Pomiar</label>
      <label><input type="radio" name="k" checked>Naprawa</label><label><input type="radio" name="k">Konserwacja</label><label><input type="radio" name="k">Inne</label>
    </fieldset>
  </form>
  <footer class="winfoot white"><button class="btn"><svg><use href="#i-ok"/></svg>Zatwierdź</button><button class="btn flat"><svg><use href="#i-no"/></svg>Anuluj</button></footer>
</section>

<section class="window order">
  <header class="wintitle"><svg class="ic16"><use href="#i-logo"/></svg><h2>MODUS</h2><div class="winbtns"><button aria-label="Minimalizuj"><svg><use href="#i-min"/></svg></button><button aria-label="Maksymalizuj"><svg><use href="#i-max"/></svg></button><button class="red" aria-label="Zamknij"><svg><use href="#i-close"/></svg></button></div></header>
  <div class="whitebar heading"><h3>Zlecenie NAPRAWY Nr 91</h3><svg><use href="#i-help"/></svg></div>
  <form class="orderform">
    <div class="prio">
      <div class="priocol">
        <div class="line"><label for="pr">Priorytet</label><input id="pr" class="box focus" type="text"></div>
        <div class="line"><label for="zr">Źródło</label><input id="zr" class="box gray" type="text"></div>
      </div>
      <label for="o2">Obiekt</label><input id="o2" class="box gray long" type="text" value="CNC (CNC)">
      <button type="button" class="gearsbtn" aria-label="Pokaż obiekt"><svg><use href="#i-gears"/></svg></button>
    </div>
    <div class="formcols">
      <div class="dates">
        <div class="line"><label for="dp">Data planowana</label><span class="combo"><input id="dp" type="text" value="15.10.2024"><svg><use href="#i-tri"/></svg></span><span class="combo time"><input type="text" value="08:05" aria-label="Godzina planowana"><span class="spin"><svg class="up"><use href="#i-tri"/></svg><svg><use href="#i-tri"/></svg></span></span></div>
        <div class="line"><label for="dw">Data wystawienia</label><span class="combo"><input id="dw" type="text" value="15.10.2024"><svg><use href="#i-tri"/></svg></span><span class="combo time"><input type="text" value="08:05" aria-label="Godzina wystawienia"><span class="spin"><svg class="up"><use href="#i-tri"/></svg><svg><use href="#i-tri"/></svg></span></span></div>
      </div>
      <div class="lookups">
        <div class="line"><label for="l1">Linia</label><span class="lookup"><input id="l1" type="text" value="Linia 1"><svg><use href="#i-lens"/></svg><svg><use href="#i-redx"/></svg></span></div>
        <div class="line"><label for="l2">Rodzaj naprawy</label><span class="lookup"><input id="l2" type="text"><svg><use href="#i-lens"/></svg><svg><use href="#i-redx"/></svg></span></div>
        <div class="line"><label for="l3">Wykonawca</label><span class="lookup"><input id="l3" type="text"><svg><use href="#i-lens"/></svg><svg><use href="#i-redx"/></svg></span></div>
      </div>
    </div>
    <fieldset class="basis"><legend>Na podstawie awarii:</legend><button type="button" aria-label="Rozwiń"><svg><use href="#i-chev"/></svg></button></fieldset>
  </form>
  <div class="tabstrip">
    <button class="tab active">Czynności</button><button class="tab">Części</button><button class="tab">Koszty</button><button class="tab">Przestoje</button><button class="tab">Uwagi</button>
  </div>
  <div class="tabpage">
    <div class="amber top"></div>
    <div class="pagebody">
      <div class="vtools">
        <svg><use href="#i-plus"/></svg><svg><use href="#i-x"/></svg><hr><svg class="big"><use href="#i-useradd"/></svg><svg class="big"><use href="#i-userdel"/></svg><svg class="big"><use href="#i-book"/></svg><svg><use href="#i-gear"/></svg><svg><use href="#i-size"/></svg>
      </div>
      <div class="ordergrid">
        <table class="grid">
          <colgroup><col class="w12"><col class="w100"><col class="w140"><col class="w100"><col class="w120"><col class="w200"><col></colgroup>
          <thead><tr><th class="ind"><svg><use href="#i-star"/></svg></th><th>Czynność</th><th>Wynik</th><th>Główna</th><th>Czas planowa...</th><th>Przydzieleni pracownicy</th><th>Stan</th></tr></thead>
          <tbody><tr class="filter tall"><td class="ind"><svg><use href="#i-pin"/></svg></td><td colspan="6">kliknij aby dodać filtr</td></tr></tbody>
        </table>
        <p class="empty">Brak danych. Kliknij 'Dodaj' aby wprowadzić nowy rekord.</p>
        <div class="gridfoot two"><span class="sum short">0 rekordów</span><span class="sum mid"></span></div>
        <div class="hscroll"><svg class="left"><use href="#i-tri"/></svg><i class="thumb"></i><svg class="right"><use href="#i-tri"/></svg></div>
      </div>
      <div class="rightstrip"><svg><use href="#i-list"/></svg></div>
    </div>
    <div class="amber bottom"></div>
  </div>
  <footer class="winfoot white"><button class="btn wide"><svg><use href="#i-vee"/></svg>Zatwierdź i wykonaj</button><button class="btn wide"><svg><use href="#i-vee"/></svg>Zatwierdź cyklicznie</button><button class="btn last"><svg><use href="#i-ok"/></svg>Zatwierdź</button><button class="btn flat"><svg><use href="#i-no"/></svg>Anuluj</button></footer>
</section>

<svg class="arrows" viewBox="0 0 1240 1140" aria-hidden="true"><path d="m1451 701-489 227 7 7-44 2 20-22 6 5z" fill="#05b0f0"/><path d="m810 1019 8-1 98 82 3-9 14 26-28-7 6-5z" fill="#05b0f0"/></svg>
<i class="mark markadd"></i><i class="mark markorders"></i>
<b class="badge b1">1</b><b class="badge b2">2</b><b class="badge b3">3</b><b class="badge b4">4</b><b class="badge b5">5</b><b class="badge b6">6</b><b class="badge b7">7</b><b class="badge b8">8</b>
</div>
</body>
</html>
```
FILE: styles.css
```css
* { box-sizing: border-box; }
html, body { margin: 0; background: #fff; }
body { font: 11px/14px "Liberation Sans", Arial, sans-serif; color: #1b2846; }
h1, h2, h3, p, ul, fieldset, legend { margin: 0; padding: 0; font: inherit; list-style: none; }
button, input, select { font: inherit; color: inherit; margin: 0; padding: 0; border: 0; background: none; border-radius: 0; min-width: 0; }
a { color: inherit; text-decoration: none; }
svg { display: block; flex: none; width: 16px; height: 16px; overflow: visible; }
.defs { position: absolute; width: 0; height: 0; }
.ic16 { width: 16px; height: 16px; }

.desktop { position: relative; overflow: hidden; padding-bottom: 3px; }
.app { background: #bac6d7; }

/* title and menu bars */
.titlebar { display: flex; align-items: center; gap: 4px; height: 23px; padding-left: 2px; font-size: 12px; color: #6d7888; background: linear-gradient(#c5ccda, #dce1ea); }
.winbtns { display: flex; gap: 3px; margin-left: auto; }
.winbtns button { display: grid; place-items: center; width: 30px; height: 16px; border: 1px solid #4d5f7d; border-radius: 2px; background: linear-gradient(#dfe6ef 50%, #a9bacd 50%, #c3d3e2); }
.winbtns svg { width: 12px; height: 10px; }
.winbtns .red { border-color: #5a1c26; background: linear-gradient(#e5a79f 45%, #b03a2e 50%, #d5705e); }
.winbtns.ghost button { width: 32px; border-color: #a0abc0; background: #d3dae6; opacity: .8; }
.winbtns.ghost svg { opacity: .6; }
.menubar { display: grid; grid-template-columns: 1fr 80px 67px repeat(7, 1fr) 92px; height: 19px; color: #475268; background: linear-gradient(#eceff3 45%, #dadee7 45%); border-bottom: 1px solid #979ca6; }
.menubar a { display: flex; align-items: center; gap: 1px; padding-left: 6px; border-right: 1px solid #e8ebf0; white-space: nowrap; }
.menubar svg { width: 15px; height: 15px; }
.menuicons { display: flex; align-items: center; gap: 15px; padding-left: 6px; }

.workspace { display: grid; grid-template-columns: 185px 8px minmax(0, 1fr); }
.sidebar { display: flex; flex-direction: column; padding-top: 1px; }
.search { height: 20px; margin: 0 1px; padding: 0 1px; background: #fff; border: 1px solid #a0abc0; }
.todo { height: 22px; margin: 2px 2px 1px; padding-top: 1px; font-size: 15px; background: #ffff73; }
.menu { flex: 1; padding: 12px 12px 0; background: #2b3a59; color: #eef1f7; }
.menu h2 { display: flex; align-items: center; gap: 5px; height: 25px; padding: 0 7px 0 11px; font-weight: bold; background: linear-gradient(#4f6288, #3d507a); }
.menu h2 svg { width: 20px; height: 20px; }
.menu h2 .chev { width: 12px; height: 12px; margin-left: auto; color: #c6cfe0; }
.menu ul { padding: 8px 0 10px; background: radial-gradient(#3d4c6c 30%, transparent 35%) 0 0 / 4px 4px; }
.menu li a { display: flex; align-items: center; gap: 8px; height: 28px; padding-left: 13px; white-space: nowrap; }
.menu li svg { width: 20px; height: 20px; }
.menu li .kb { width: 20px; height: 12px; }
.onegroup { display: flex; align-items: center; gap: 3px; height: 21px; padding-left: 2px; }
.cb { appearance: none; flex: none; width: 14px; height: 14px; background: linear-gradient(135deg, #fff, #dde1e8); border: 1px solid #9aa3b3; }
.cb:checked::after { content: ""; display: block; width: 4px; height: 8px; margin: 0 4px; border: solid #111; border-width: 0 2px 2px 0; transform: rotate(40deg); }
.cb.soft { border-color: #a5b1c4; }
.onegroup .cb { width: 13px; height: 13px; }
.splitter { display: grid; place-items: center; border-right: 1px solid #98a5ba; }
.dots { width: 2px; height: 14px; background: repeating-linear-gradient(#8593b0 0 2px, transparent 2px 4px); }
.dots.row { width: 14px; height: 2px; background: repeating-linear-gradient(90deg, #8593b0 0 2px, transparent 2px 4px); }

/* tabs */
.content { display: flex; flex-direction: column; padding-left: 1px; border-right: 1px solid #98a5ba; }
.tabstrip { display: flex; align-items: flex-end; gap: 1px; height: 29px; }
.tab { display: flex; align-items: center; gap: 8px; height: 25px; padding: 0 6px; white-space: nowrap; border: 1px solid #98a5ba; border-bottom: 0; border-radius: 2px 2px 0 0; background: linear-gradient(#e9ecf2, #cdd5e2); }
.tab.active { background: linear-gradient(#fdf6e1 45%, #ffe39c 60%); }
.tab svg { width: 14px; height: 14px; }
.tab.doc { width: 126px; height: 28px; padding: 0 10px 0 12px; justify-content: space-between; }
.tab b { font-size: 11px; color: #68738a; }
.stripctl { display: flex; align-items: center; gap: 14px; height: 28px; margin: 0 4px 2px auto; color: #7585a8; }
.stripctl svg { width: 8px; height: 8px; }
.stripctl b { font-size: 12px; }
.amber { height: 5px; background: #ffe39c; }
.amber.top { border-top: 1px solid #98a5ba; }
.amber.bottom { border-bottom: 1px solid #98a5ba; }

/* toolbars */
.toolbar { display: flex; align-items: center; height: 38px; }
.tool { display: flex; flex-direction: column; align-items: center; justify-content: space-between; width: 38px; height: 36px; padding: 3px 0 2px; white-space: nowrap; }
.tool.hot { border: 1px solid #e6d8b0; border-radius: 2px; padding: 2px 0 1px; background: linear-gradient(#dbe1ea, #c3cddc); box-shadow: 0 0 0 1px #98a5ba inset; }
.tool.tiny { justify-content: center; font-size: 8px; }
.vsep { width: 1px; height: 32px; margin: 0 2px 0 6px; background: #a2aec2; }
.find { width: 132px; height: 30px; margin-right: 4px; background: #fff; border: 1px solid #98a5ba; }
.toolbar .cb { margin-left: 6px; }
.range { margin-left: 5px; display: grid; gap: 1px; }
.rangerow { display: flex; gap: 1px; height: 18px; }
.arrow { display: grid; place-items: center; width: 21px; border: 1px solid #98a5ba; background: linear-gradient(#f6f7f9, #cfd6e2); }
.arrow svg { width: 10px; height: 14px; }
.select { position: relative; width: 83px; background: #fff; border: 1px solid #98a5ba; }
.select.wide { width: 105px; font-weight: bold; }
.select select { appearance: none; display: block; width: 100%; height: 100%; padding-left: 2px; }
.select::after { content: ""; position: absolute; right: 5px; top: 6px; border: 4px solid transparent; border-top: 5px solid #17213a; border-bottom: 0; }
.righticons { display: flex; gap: 17px; margin-left: auto; padding-right: 13px; }

/* trees */
.tree { padding: 1px; }
.tree li { display: flex; align-items: center; height: 19px; padding-left: 27px; white-space: nowrap; overflow: hidden; background: repeating-linear-gradient(#b9c0cc 0 1px, transparent 1px 3px) 8px 0 / 1px 100% no-repeat #f6f7f9; }
.tree li:nth-child(even) { background-color: #ebf6ed; }
.tree li::before { content: ""; width: 10px; height: 19px; border-left: 1px dotted #b9c0cc; background: repeating-linear-gradient(90deg, #b9c0cc 0 1px, transparent 1px 3px) 0 9px / 100% 1px no-repeat; }
.tree li svg { width: 14px; height: 14px; margin: 0 7px 0 0; }
.tree li.g { padding-left: 4px; font-weight: bold; }
.tree li.g::before { display: none; }
.tree li.g svg, .tree li.g i { width: 8px; height: 8px; margin: 0 8px 0 0; }
.maintree { border-top: 1px solid #98a5ba; border-right: 1px solid #98a5ba; }

.upper { display: grid; grid-template-columns: 183px 6px minmax(0, 1fr) 265px; height: 597px; padding: 0 2px 0 1px; }
.gridbox { grid-column: 3; display: flex; margin-right: 7px; }
.gridcol { flex: 1; min-width: 0; display: flex; flex-direction: column; }
.groupby { flex: none; height: 40px; padding: 11px 8px 0; font-size: 16px; line-height: 22px; color: #9aa6bd; background: #c8d1e3; }
.grid { width: 100%; table-layout: fixed; border-collapse: collapse; font-size: 16px; line-height: 20px; color: #17213a; }
.grid th, .grid td { height: 23px; padding: 0 0 0 2px; text-align: left; font-weight: normal; white-space: nowrap; }
.grid th { height: 25px; padding-top: 2px; overflow: hidden; color: #475268; background: linear-gradient(#eceff3 45%, #dadee7 50%); border-right: 1px solid #e8ebf0; border-top: 1px solid #aab5c9; }
.grid .ind { padding: 0; background: #dde1ea; }
.grid .ind svg { width: 8px; height: 8px; margin: auto; }
.grid tbody tr { background: #ebf6ed; }
.grid tbody tr:nth-child(even) { background: #f6f7f9; }
.grid tbody tr.filter { background: #ebf6ed; }
.grid .filter td { height: 26px; text-align: center; color: #757d78; border-bottom: 2px solid #b4bfd2; }
.grid .filter.tall td { height: 87px; }
.grid tbody tr.sel { background: #ffe39c; }
.grid .sel td { border: dotted #17213a; border-width: 1px 0; }
.sort { float: right; width: 8px; height: 8px; margin: 6px 8px 0 0; color: #9aa3b3; }
.asc, .up { transform: rotate(180deg); }
.w12 { width: 12px; } .w59 { width: 59px; } .w94 { width: 94px; } .w99 { width: 99px; } .w100 { width: 100px; } .w101 { width: 101px; }
.w120 { width: 120px; } .w140 { width: 140px; } .w150 { width: 150px; } .w166 { width: 166px; } .w186 { width: 186px; } .w200 { width: 200px; }

.vscroll { display: flex; flex-direction: column; align-items: center; width: 16px; padding: 4px 0; color: #808898; background: #e8eaec; }
.vscroll svg, .hscroll svg { width: 8px; height: 8px; }
.thumb { display: block; border: 1px solid #9da8ba; border-radius: 2px; background: repeating-linear-gradient(90deg, #7d8799 0 1px, transparent 1px 3px) center / 7px 7px no-repeat, linear-gradient(#eceef3 50%, #cdd4e1 55%); }
.vscroll .thumb { width: 15px; height: 111px; margin: 5px 0 auto; background: repeating-linear-gradient(#7d8799 0 1px, transparent 1px 3px) center / 7px 7px no-repeat, linear-gradient(90deg, #eceef3 50%, #cdd4e1 55%); }
.vscroll .thumb.long { height: 400px; }
.hscroll { display: flex; flex: none; align-items: center; height: 17px; padding: 0 5px; color: #808898; background: #e8eaec; border-top: 1px solid #c5cad4; }
.hscroll .thumb { width: 344px; height: 15px; margin: 0 auto 0 4px; }
.left { transform: rotate(90deg); }
.right { transform: rotate(-90deg); }

.details { padding: 1px 0 0 6px; background: #fff; border: 1px solid #98a5ba; }
.details strong { display: flex; align-items: center; gap: 7px; height: 16px; }
.details svg { width: 11px; height: 9px; }
.details span { display: block; padding-left: 36px; line-height: 17px; }

.tabstrip.low { height: 34px; padding-left: 2px; }
.lower { display: grid; grid-template-columns: 33px minmax(0, 1fr) 34px; height: 237px; border-top: 1px solid #b9c3d3; }
.vtools { display: flex; flex-direction: column; align-items: center; gap: 11px; padding: 5px 0 0 1px; }
.vtools .big { width: 20px; height: 20px; margin: -2px 0 0; }
.vtools hr { width: 100%; margin: -6px 0 -4px; border: 0; border-top: 1px solid #8e9ab0; border-bottom: 1px solid #fff; }
.vtools svg:last-child { margin: 4px 6px 0 0; }
.lowgrid { display: flex; flex-direction: column; background: #fff; }
.lowgrid .grid, .lowgrid .gridfoot, .lowgrid .empty { width: 1360px; }
.empty { flex: 1; display: grid; place-items: center; padding-left: 11px; font-size: 16px; line-height: 20px; color: #17213a; }
.gridfoot { display: flex; flex: none; align-items: center; height: 39px; padding-left: 14px; background: linear-gradient(#eceff3, #e2e6ec 50%, #dadee7 50%); border-top: 1px solid #aab5c9; }
.sum { width: 181px; height: 33px; padding-left: 11px; font-size: 16px; line-height: 33px; white-space: nowrap; background: #fff; border: 1px solid #c3cbd9; border-radius: 2px; overflow: hidden; }
.sum.short { width: 95px; border-right-width: 6px; border-right-color: #fff; }
.sum.mid { width: 116px; margin-left: 244px; }
.rightstrip { display: flex; justify-content: center; padding-top: 5px; }
.hide { display: flex; flex-direction: column; align-items: center; gap: 3px; height: 25px; padding-top: 2px; letter-spacing: 2px; }
.status { display: grid; grid-template-columns: 1fr 422px 304px; height: 18px; padding: 2px 4px 0; color: #475268; background: linear-gradient(#eceff3 45%, #dadee7 50%); border-top: 1px solid #98a5ba; }
.status span:last-child { text-align: right; }

/* floating windows */
.window { display: flex; flex-direction: column; padding: 2px 11px 7px 9px; background: linear-gradient(#93a2bc, #bac6d7 30px, #bac6d7); border: 4px solid #f00; border-radius: 7px; box-shadow: 0 1px 4px #0009, inset 0 0 3px 1px #34425a; }
.wintitle { display: flex; flex: none; align-items: center; gap: 4px; height: 30px; font-size: 12px; color: #111827; }
.tag { padding: 0 4px; border: 1px solid #98a5ba; line-height: 15px; white-space: nowrap; }
.pick { position: absolute; left: 281px; top: 199px; width: 1409px; height: 530px; }
.picktag { height: 21px; padding-top: 3px; display: flex; align-items: flex-start; }
.pick .toolbar { height: 40px; }
.pick .righticons { padding-right: 12px; }
.pick .tool.multi { width: 60px; }
.only { display: flex; align-items: center; gap: 2px; margin: 0 5px 0 2px; white-space: nowrap; }
.only .cb.cb { margin-left: 0; }
.pickbody { display: grid; grid-template-columns: 184px 6px minmax(0, 1fr); grid-template-rows: minmax(0, 1fr); height: 382px; }
.treebox { border: 2px solid #98a5ba; }
.treehead { display: flex; align-items: center; justify-content: flex-end; height: 24px; padding-right: 4px; border-bottom: 2px solid #98a5ba; }
.splitter.thin { border: 0; }
.treebox .tree { padding: 0; }
.pickgrid { display: flex; min-height: 0; }
.rows { flex: 1; min-height: 0; overflow: hidden; background: #f6f7f9; }
.winfoot { display: flex; flex: none; align-items: center; justify-content: flex-end; height: 40px; border: 1px solid #98a5ba; }
.btn { display: flex; align-items: center; justify-content: center; gap: 5px; width: 100px; height: 31px; white-space: nowrap; border: 1px solid #98a5ba; border-radius: 2px; box-shadow: inset 0 0 0 1px #f0e4c0; background: linear-gradient(#e9ecf2 45%, #cdd4e2 55%); }
.btn svg { width: 14px; height: 14px; }
.btn.flat { border: 0; background: none; box-shadow: none; }
.pick .btn.flat { width: 118px; padding-right: 10px; }
.white { background: #eeeff4; }
.whitebar { display: flex; flex: none; align-items: center; height: 30px; background: #eeeff4; border: 1px solid #98a5ba; }

.neworder { position: absolute; left: 487px; top: 790px; width: 486px; height: 247px; padding: 5px 6px 6px 10px; }
.neworder .wintitle { height: 28px; }
.neworder .tag { line-height: 16px; padding: 0 8px; }
.neworder form { flex: 1; padding-top: 9px; }
.objrow { display: flex; align-items: center; gap: 1px; }
.objfield { flex: 1; display: flex; align-items: center; height: 31px; margin-right: 4px; padding: 0 2px 0 1px; border: 2px solid #8a98ad; }
.picked { flex: 1; font-size: 18px; height: 24px; color: #fff; background: linear-gradient(#0078d7 0 0) left / 95px 100% no-repeat; }
.kinds { display: grid; grid-template-columns: repeat(3, 111px); height: 66px; margin: 10px 4px 0 0; padding: 0 8px; border: 1px solid #98a5ba; border-radius: 2px; color: #8a96ad; }
.kinds legend { margin-left: 4px; padding: 0 3px; }
.kinds label { display: flex; align-items: center; gap: 4px; height: 23px; color: #1b2846; }
.kinds input { appearance: none; width: 15px; height: 15px; border: 1px solid #98a5ba; border-radius: 50%; background: linear-gradient(135deg, #fff, #d5dbe5); }
.kinds input:checked { background: radial-gradient(#8194b6 3px, #eef1f6 4px); }
.neworder .btn.flat { width: 114px; }

.order { width: 822px; margin: 22px 0 0 401px; padding: 2px 10px 7px 5px; }
.order .wintitle { height: 26px; }
.heading { justify-content: space-between; padding: 0 9px 0 0; }
.heading h3 { font-size: 16px; color: #0c1220; }
.heading svg { width: 20px; height: 20px; }
.orderform { height: 158px; padding-top: 5px; }
.prio { display: flex; align-items: center; gap: 2px; height: 39px; }
.line { display: flex; align-items: center; gap: 3px; }
.line label { width: 94px; text-align: right; white-space: nowrap; }
.priocol { display: grid; gap: 2px; }
.box { width: 48px; height: 18px; padding-left: 2px; border: 1px solid #98a5ba; }
.box.focus { height: 19px; background: #fff; border: 2px solid #8a98ad; }
.box.long { width: 480px; height: 20px; font-size: 12px; }
.gearsbtn { margin-left: 4px; }
.gearsbtn svg { width: 22px; height: 22px; }
.formcols { display: flex; justify-content: space-between; padding: 2px 26px 0 0; }
.dates, .lookups { display: grid; gap: 2px; align-content: start; }
.combo { display: flex; align-items: center; width: 97px; height: 20px; padding: 0 5px 0 2px; font-size: 13px; background: #fff; border: 1px solid #98a5ba; }
.combo input { flex: 1; width: 0; }
.combo svg { width: 8px; height: 8px; }
.combo.time { width: 62px; }
.spin { display: grid; gap: 1px; }
.lookup { display: flex; align-items: center; gap: 4px; width: 286px; height: 18px; padding: 0 2px; border: 1px solid #98a5ba; }
.lookup input { flex: 1; font-size: 10px; }
.basis { display: flex; justify-content: flex-end; align-items: flex-start; height: 20px; margin: 13px 66px 0 71px; border: 1px solid #98a5ba; border-radius: 2px; }
.basis legend { margin-left: 4px; padding: 0 4px; font-weight: bold; color: #8793aa; }
.basis button { display: grid; place-items: center; width: 16px; height: 16px; margin: -14px 8px 0 0; background: #eef1f6; border: 1px solid #98a5ba; border-radius: 2px; }
.basis svg { width: 10px; height: 10px; transform: rotate(180deg); }
.order .tabstrip { height: 24px; padding-left: 9px; margin-top: 1px; }
.order .tab { height: 25px; padding: 0 7px; }
.tabpage { margin: 0 5px 6px 6px; border: 1px solid #98a5ba; border-top: 0; }
.pagebody { display: grid; grid-template-columns: 32px minmax(0, 1fr) 34px; margin: 10px; }
.ordergrid { display: flex; flex-direction: column; height: 440px; background: #fff; }
.order .hscroll .thumb { width: 340px; }
.order .winfoot { justify-content: flex-start; padding-left: 115px; gap: 7px; border: 0; }
.order .btn { height: 30px; }
.order .wide { width: 161px; font-size: 12px; }
.order .wide svg { width: 20px; height: 20px; }
.order .last { margin-left: 136px; }

/* callouts */
.arrows { position: absolute; left: 0; top: 0; width: 1240px; height: 1140px; filter: drop-shadow(2px 3px 3px #0006); pointer-events: none; }
.mark { position: absolute; border: 4px solid #f00; border-radius: 7px; box-shadow: 1px 2px 4px #0007; }
.markadd { left: 188px; top: 73px; width: 50px; height: 47px; }
.markorders { left: 11px; top: 311px; width: 159px; height: 35px; }
.badge { position: absolute; width: 29px; height: 29px; border: 1px solid #f00; border-radius: 50%; background: #d4262b; color: #fff; font: 16px/27px "Liberation Sans", Arial, sans-serif; text-align: center; box-shadow: 1px 3px 5px #0007; }
.b1 { left: 120px; top: 284px; }
.b2 { left: 160px; top: 90px; }
.b3 { left: 744px; top: 200px; }
.b4 { left: 1436px; top: 674px; }
.b5 { left: 506px; top: 970px; }
.b6 { left: 833px; top: 990px; }
.b7 { left: 374px; top: 1064px; }
.b8 { left: 904px; top: 1789px; }
```
